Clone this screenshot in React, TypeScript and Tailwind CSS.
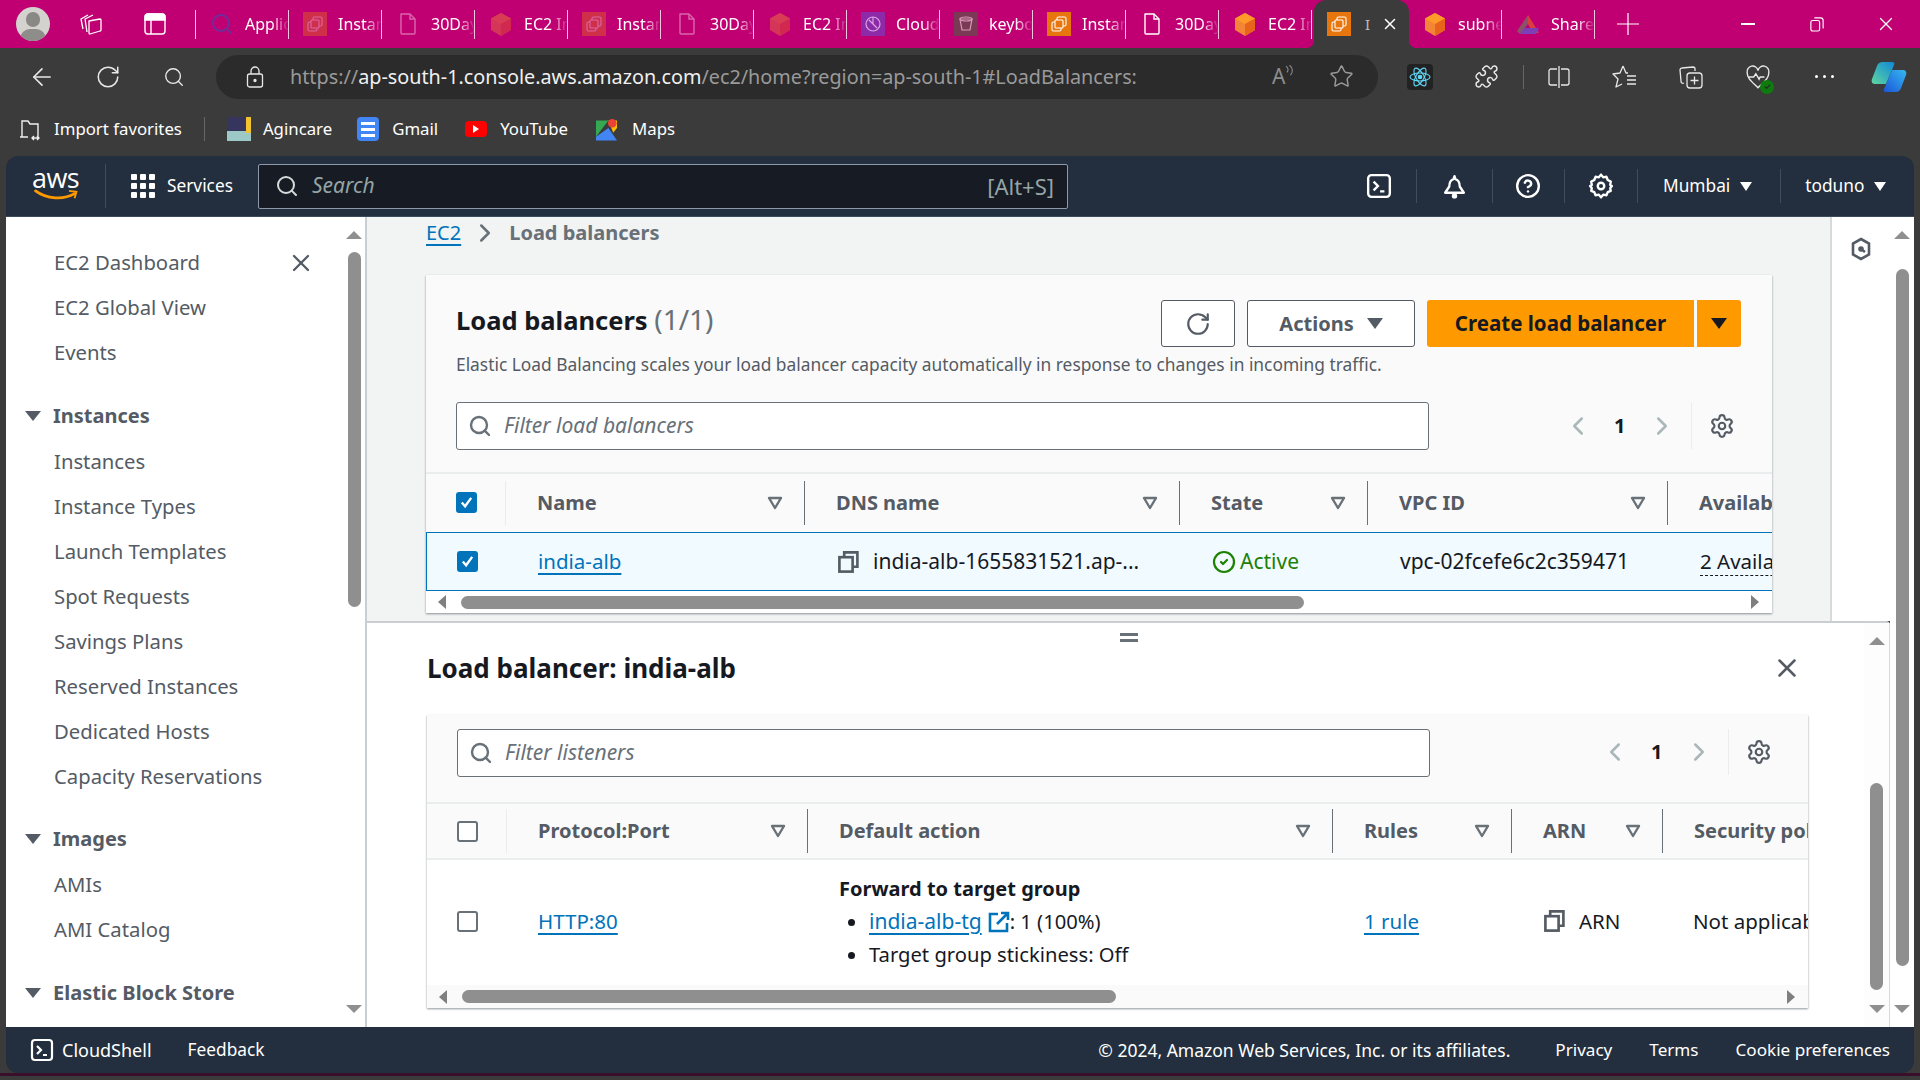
import React from 'react';
import {
  ArrowLeft, RotateCw, Search, Star, X, ChevronLeft, ChevronRight,
  Settings, CircleHelp, Puzzle, CircleCheck,
} from 'lucide-react';

const font = "font-['Noto_Sans','Open_Sans',sans-serif]";

type TabKind = 'search' | 'instance' | 'doc' | 'cube' | 'cloud' | 'bucket' | 'drive';

const tabs: { label: string; kind: TabKind; faded?: boolean }[] = [
  { label: 'Application', kind: 'search', faded: true },
  { label: 'Instances', kind: 'instance', faded: true },
  { label: '30Days', kind: 'doc', faded: true },
  { label: 'EC2 Instance', kind: 'cube', faded: true },
  { label: 'Instances', kind: 'instance', faded: true },
  { label: '30Days', kind: 'doc', faded: true },
  { label: 'EC2 Instance', kind: 'cube', faded: true },
  { label: 'Cloudfront', kind: 'cloud', faded: true },
  { label: 'keyboard', kind: 'bucket', faded: true },
  { label: 'Instances', kind: 'instance' },
  { label: '30Days', kind: 'doc' },
  { label: 'EC2 Instance', kind: 'cube' },
];

const TabIcon = ({ kind, faded }: { kind: TabKind; faded?: boolean }) => {
  const cls = `w-[24px] h-[24px] shrink-0 ${faded ? 'opacity-40' : ''}`;
  if (kind === 'search') return <Search className="w-[24px] h-[24px] shrink-0 text-[#6a2f9c]" strokeWidth={1.8} />;
  if (kind === 'doc')
    return (
      <svg viewBox="0 0 24 24" className={cls} fill="none" stroke="#fff" strokeWidth="1.400">
        <path d="M5 2h9l5 5v14a1 1 0 0 1-1 1H6a1 1 0 0 1-1-1z" strokeLinejoin="round" />
        <path d="M14 2v5h5" />
      </svg>
    );
  if (kind === 'cube')
    return (
      <svg viewBox="0 0 24 24" className={cls}>
        <path d="M12 1l10 5.500v11.500l-10 6-10-6v-11.500z" fill="#f58536" />
        <path d="M12 1l10 5.500-10 5.500-10-5.500z" fill="#ff9a2a" />
        <path d="M12 12l10-5.500v11.500l-10 6z" fill="#e8641b" />
      </svg>
    );
  if (kind === 'instance')
    return (
      <svg viewBox="0 0 24 24" className={cls}>
        <rect width="24" height="24" fill="#e8760f" />
        <rect x="10" y="5" width="9" height="9" rx="1.500" fill="none" stroke="#fff" strokeWidth="1.100" />
        <rect x="5" y="10" width="9" height="9" rx="1.500" fill="#e8760f" stroke="#fff" strokeWidth="1.100" />
        <rect x="8" y="8" width="8" height="8" rx="1" fill="#e8760f" stroke="#fff" strokeWidth="1.100" />
      </svg>
    );
  if (kind === 'cloud')
    return (
      <svg viewBox="0 0 24 24" className="w-[24px] h-[24px] shrink-0">
        <rect width="24" height="24" fill="#8c2aa8" />
        <circle cx="12" cy="12" r="7" fill="none" stroke="#d9a6e6" strokeWidth="1.200" />
        <path d="M8 8l8 8M12 5v7" stroke="#d9a6e6" strokeWidth="1.200" />
      </svg>
    );
  if (kind === 'bucket')
    return (
      <svg viewBox="0 0 24 24" className="w-[24px] h-[24px] shrink-0">
        <rect width="24" height="24" fill="#7a3a56" />
        <path d="M6 7h12l-2 11H8z" fill="none" stroke="#d99ab8" strokeWidth="1.200" />
        <ellipse cx="12" cy="7" rx="6" ry="2" fill="none" stroke="#d99ab8" strokeWidth="1.200" />
      </svg>
    );
  return (
    <svg viewBox="0 0 24 24" className="w-[24px] h-[24px] shrink-0">
      <path d="M12 3l11 18h-6L12 12z" fill="#d8403f" />
      <path d="M12 3L1 19l3 3 8-10z" fill="#8b5368" />
      <path d="M4 22l4-6h15l-3 6z" fill="#7c3fb5" />
    </svg>
  );
};

const Tab = ({ label, kind, faded }: { label: string; kind: TabKind; faded?: boolean }) => (
  <div className="w-[93px] h-[48px] flex items-center pl-[14px] overflow-hidden shrink-0 relative">
    <TabIcon kind={kind} faded={faded} />
    <span className="ml-[11px] text-white text-[16px] whitespace-nowrap overflow-hidden w-[44px] [mask-image:linear-gradient(to_right,black_60%,transparent)]">{label}</span>
    <div className="absolute right-0 top-[10px] w-px h-[29px] bg-[#f3c6e0]" />
  </div>
);

const WorkspacesIcon = () => (
  <svg viewBox="0 0 26 26" className="w-[26px] h-[26px] ml-[28px] shrink-0" fill="none" stroke="#fff" strokeWidth="1.300" strokeLinejoin="round">
    <path d="M5 18L3 8l7-4" />
    <path d="M9 21L7 8l8-4" />
    <path d="M11 10l11-2a1 1 0 0 1 1 1v10a1 1 0 0 1-1 1l-10 3a1 1 0 0 1-1-1z" />
  </svg>
);

const TabActionsIcon = () => (
  <svg viewBox="0 0 22 22" className="w-[22px] h-[22px] ml-[40px] shrink-0" fill="none" stroke="#fff" strokeWidth="1.400">
    <rect x="1" y="1" width="20" height="20" rx="3" />
    <path d="M1 6V4a3 3 0 0 1 3-3h14a3 3 0 0 1 3 3v3H1z" fill="#fff" />
    <path d="M7 7v14" />
  </svg>
);

const TabStrip = () => (
  <div className="h-[48px] bg-[#c00072] flex items-center shrink-0">
    <div className="w-[34px] h-[34px] rounded-full bg-[#d4d2cf] ml-[16px] relative overflow-hidden shrink-0">
      <div className="absolute left-[10px] top-[5px] w-[14px] h-[15px] rounded-full bg-[#8a8885]" />
      <div className="absolute left-[4px] top-[22px] w-[26px] h-[20px] rounded-full bg-[#8f8d8a]" />
    </div>
    <WorkspacesIcon />
    <TabActionsIcon />
    <div className="w-px h-[29px] bg-[#f3c6e0] ml-[29px] shrink-0" />
    {tabs.map((t, i) => (
      <Tab key={i} {...t} />
    ))}
    <div className="w-[95px] h-[48px] ml-[2px] bg-[#3b3b3b] rounded-t-xl flex items-center pl-[13px] shrink-0 relative">
      <TabIcon kind="instance" />
      <span className="ml-[14px] text-[#bbb] text-[15px]">I</span>
      <X className="w-[18px] h-[18px] text-white ml-[11px]" />
      <div className="absolute -left-[8px] bottom-0 w-[8px] h-[8px] bg-[radial-gradient(circle_at_0_0,transparent_8px,#3b3b3b_8px)]" />
      <div className="absolute -right-[8px] bottom-0 w-[8px] h-[8px] bg-[radial-gradient(circle_at_100%_0,transparent_8px,#3b3b3b_8px)]" />
    </div>
    <Tab label="subnet" kind="cube" />
    <Tab label="Share" kind="drive" />
    <svg viewBox="0 0 22 22" className="w-[22px] h-[22px] ml-[22px] shrink-0" stroke="#fff" strokeWidth="1.200">
      <path d="M11 0v22M0 11h22" />
    </svg>
    <div className="w-[14px] h-[2px] bg-white ml-[102px] shrink-0" />
    <svg viewBox="0 0 16 18" className="w-[14px] h-[16px] ml-[55px] shrink-0" fill="none" stroke="#fff" strokeWidth="1.300">
      <rect x="1" y="5" width="10" height="12" rx="2" />
      <path d="M5 2h7a3 3 0 0 1 3 3v9" />
    </svg>
    <X className="w-[22px] h-[22px] text-white ml-[51px] shrink-0" strokeWidth={1.4} />
  </div>
);

const SplitIcon = () => (
  <svg viewBox="0 0 24 24" className="w-[24px] h-[24px] ml-[23px] shrink-0" fill="none" stroke="#e8e8e8" strokeWidth="1.300">
    <path d="M10 4H4a2 2 0 0 0-2 2v12a2 2 0 0 0 2 2h6M14 4h6a2 2 0 0 1 2 2v12a2 2 0 0 1-2 2h-6M12 1v22" />
  </svg>
);

const FavoritesIcon = () => (
  <svg viewBox="0 0 26 26" className="w-[26px] h-[26px] ml-[41px] shrink-0" fill="none" stroke="#e8e8e8" strokeWidth="1.300" strokeLinejoin="round">
    <path d="M11 2l3 7h2M11 2L8 9l-7 1 5 5-2 8 6-3M15 12h9M15 16h9M15 20h9" />
  </svg>
);

const CollectionsIcon = () => (
  <svg viewBox="0 0 26 26" className="w-[26px] h-[26px] ml-[40px] shrink-0" fill="none" stroke="#e8e8e8" strokeWidth="1.300">
    <path d="M17 7V5a2 2 0 0 0-2-2L4 4a2 2 0 0 0-2 2l1 11a2 2 0 0 0 3 2" />
    <rect x="9" y="9" width="15" height="15" rx="3" />
    <path d="M16.500 12.500v8M12.500 16.500h8" />
  </svg>
);

const Toolbar = () => (
  <div className="h-[57px] flex items-center shrink-0 text-[#e8e8e8]">
    <ArrowLeft className="w-[28px] h-[28px] ml-[28px] shrink-0" strokeWidth={1.4} />
    <RotateCw className="w-[26px] h-[26px] ml-[39px] shrink-0" strokeWidth={1.4} />
    <Search className="w-[22px] h-[22px] ml-[42px] shrink-0" strokeWidth={1.5} />
    <div className="w-[1162px] h-[44px] ml-[31px] rounded-full bg-[#2b2b2b] flex items-center shrink-0">
      <svg viewBox="0 0 18 22" className="w-[18px] h-[22px] ml-[30px] shrink-0" fill="none" stroke="#e8e8e8" strokeWidth="1.300">
        <rect x="1.500" y="8" width="15" height="13" rx="2" />
        <path d="M5 8V5a4 4 0 0 1 8 0v3" />
        <circle cx="9" cy="14.500" r="1" fill="#e8e8e8" />
      </svg>
      <div className="ml-[26px] text-[19.800px] whitespace-nowrap w-[850px] text-[#9a9a9a]">
        https://<span className="text-[#f0f0f0]">ap-south-1.console.aws.amazon.com</span>/ec2/home?region=ap-south-1#LoadBalancers:
      </div>
      <div className="ml-[132px] w-[26px] flex items-center text-[#8d8d8d] text-[21px]">
        A
        <svg viewBox="0 0 10 16" className="w-[9px] h-[15px] -mt-[10px] shrink-0" fill="none" stroke="#8d8d8d" strokeWidth="1.200">
          <path d="M1 2c3 2 3 5 1 7M5 1c4 3 4 8 1 11" />
        </svg>
      </div>
      <Star className="w-[25px] h-[25px] ml-[31px] text-[#9a9a9a] shrink-0" strokeWidth={1.4} />
    </div>
    <div className="w-[26px] h-[26px] ml-[29px] bg-[#222] rounded-sm flex items-center justify-center shrink-0">
      <svg viewBox="0 0 24 24" className="w-[24px] h-[24px]" fill="none" stroke="#61dafb" strokeWidth="1.100">
        <ellipse cx="12" cy="12" rx="10" ry="4" />
        <ellipse cx="12" cy="12" rx="10" ry="4" transform="rotate(60 12 12)" />
        <ellipse cx="12" cy="12" rx="10" ry="4" transform="rotate(120 12 12)" />
        <circle cx="12" cy="12" r="1.800" fill="#61dafb" />
      </svg>
    </div>
    <Puzzle className="w-[25px] h-[25px] ml-[41px] shrink-0" strokeWidth={1.4} />
    <div className="w-px h-[24px] bg-[#666] ml-[24px] shrink-0" />
    <SplitIcon />
    <FavoritesIcon />
    <CollectionsIcon />
    <div className="relative ml-[41px] shrink-0">
      <svg viewBox="0 0 24 24" className="w-[26px] h-[26px]" fill="none" stroke="#e8e8e8" strokeWidth="1.300">
        <path d="M12 22C6 16 2 13 2 8a5 5 0 0 1 10-2 5 5 0 0 1 10 2c0 5-4 8-10 14z" />
        <path d="M3 12h5l2-3 3 5 1-2h4" />
      </svg>
      <div className="absolute -right-[3px] -bottom-[4px] w-[14px] h-[14px] rounded-full bg-[#0f7b0f] flex items-center justify-center">
        <svg viewBox="0 0 10 10" className="w-[9px] h-[9px]" fill="none" stroke="#2b2b2b" strokeWidth="1.500">
          <path d="M2 5l2 2 4-4" />
        </svg>
      </div>
    </div>
    <div className="flex gap-[5px] ml-[44px] shrink-0">
      <div className="w-[3px] h-[3px] rounded-full bg-white" />
      <div className="w-[3px] h-[3px] rounded-full bg-white" />
      <div className="w-[3px] h-[3px] rounded-full bg-white" />
    </div>
    <svg viewBox="0 0 36 32" className="w-[36px] h-[32px] ml-[37px] shrink-0">
      <defs>
        <linearGradient id="copA" x1="0" y1="1" x2="1" y2="0">
          <stop offset="0" stopColor="#5fd6a0" />
          <stop offset="1" stopColor="#0f88d8" />
        </linearGradient>
        <linearGradient id="copB" x1="0" y1="1" x2="1" y2="0">
          <stop offset="0" stopColor="#1b55d8" />
          <stop offset="1" stopColor="#35b8f0" />
        </linearGradient>
      </defs>
      <path d="M12 1h9c2 0 3 1 2 3l-8 19H5c-4 0-5-2-4-5l5-13c1-3 3-4 6-4z" fill="url(#copA)" />
      <path d="M24 31h-9c-2 0-3-1-2-3l8-19h10c4 0 5 2 4 5l-5 13c-1 3-3 4-6 4z" fill="url(#copB)" />
    </svg>
  </div>
);

const Bookmarks = () => (
  <div className="h-[51px] pb-[3px] flex items-center shrink-0 text-white text-[16.800px]">
    <svg viewBox="0 0 24 24" className="w-[24px] h-[24px] ml-[18px] shrink-0" fill="none" stroke="#f0f0f0" strokeWidth="1.400">
      <path d="M4 20V4h6l2 3h8v13M2 20h8M14 21h7M16 19l-2 2 2 2M19 19l2 2-2 2" />
    </svg>
    <span className="ml-[12px]">Import favorites</span>
    <div className="w-px h-[24px] bg-[#666] ml-[22px]" />
    <div className="w-[24px] h-[24px] ml-[22px] relative overflow-hidden bg-[#9cc8c6] shrink-0">
      <div className="absolute left-0 top-0 w-[20px] h-[14px] bg-[#36355e]" />
      <div className="absolute right-0 top-0 w-[5px] h-[16px] bg-[#f4c430]" />
    </div>
    <span className="ml-[12px]">Agincare</span>
    <div className="w-[22px] h-[24px] ml-[25px] rounded-sm bg-[#4285f4] flex flex-col justify-center gap-[3px] px-[4px] shrink-0">
      <div className="h-[3px] bg-white" />
      <div className="h-[3px] bg-white" />
      <div className="h-[3px] bg-white" />
    </div>
    <span className="ml-[13px]">Gmail</span>
    <div className="w-[22px] h-[16px] ml-[27px] rounded-[4px] bg-[#ff0000] flex items-center justify-center shrink-0">
      <div className="w-0 h-0 border-y-[4px] border-y-transparent border-l-[6px] border-l-white" />
    </div>
    <span className="ml-[13px]">YouTube</span>
    <svg viewBox="0 0 22 24" className="w-[21px] h-[24px] ml-[28px] shrink-0">
      <path d="M0 3h13L0 20z" fill="#34a853" />
      <path d="M13 3h9v8l-4 5z" fill="#fbbc04" />
      <path d="M0 20l13-9 9 13H0z" fill="#4285f4" />
      <circle cx="17" cy="6" r="4.500" fill="#ea4335" />
    </svg>
    <span className="ml-[15px]">Maps</span>
  </div>
);

const NavSep = () => <div className="w-px h-[34px] bg-[#414d5c] shrink-0" />;

const NavCaret = () => <div className="w-0 h-0 border-x-[6px] border-x-transparent border-t-[9px] border-t-white ml-[10px]" />;

const CloudShellIcon = ({ size }: { size: string }) => (
  <svg viewBox="0 0 24 24" className={`${size} shrink-0`} fill="none" stroke="#fff" strokeWidth="2.200">
    <rect x="2" y="2" width="20" height="20" rx="3" />
    <path d="M7 8l4 4-4 4M13 17h4" />
  </svg>
);

const NavBar = () => (
  <div className="h-[61px] bg-[#232f3e] rounded-t-xl flex items-center text-white shrink-0 border-b border-[#3d4a5a]">
    <div className="w-[99px] flex flex-col items-center shrink-0">
      <span className="text-[27px] leading-[22px] font-['Open_Sans',sans-serif] tracking-tight -mt-[4px]">aws</span>
      <svg viewBox="0 0 48 14" className="w-[48px] h-[13px]">
        <path d="M2 2c12 9 30 10 42 3" fill="none" stroke="#f90" strokeWidth="3" strokeLinecap="round" />
        <path d="M38 2l8 1-2 7" fill="none" stroke="#f90" strokeWidth="2" />
      </svg>
    </div>
    <div className="w-px h-[44px] bg-[#414d5c]" />
    <div className="grid grid-cols-3 gap-[3px] ml-[25px] shrink-0">
      {Array.from({ length: 9 }).map((_, i) => (
        <div key={i} className="w-[6px] h-[6px] bg-white rounded-[1px]" />
      ))}
    </div>
    <span className="ml-[12px] text-[17.300px] w-[68px]">Services</span>
    <div className="w-[810px] h-[45px] ml-[23px] bg-[#161b24] border border-[#8d99a8] rounded-[2px] flex items-center shrink-0">
      <Search className="w-[24px] h-[24px] ml-[16px] text-[#d5dbdb]" strokeWidth={2} />
      <span className="ml-[13px] italic text-[21px] text-[#95a5a6]">Search</span>
      <span className="ml-auto mr-[13px] text-[22px] text-[#95a5a6]">[Alt+S]</span>
    </div>
    <div className="ml-[298px]"><CloudShellIcon size="w-[26px] h-[26px]" /></div>
    <div className="ml-[24px]"><NavSep /></div>
    <svg viewBox="0 0 24 24" className="w-[25px] h-[25px] ml-[25px] shrink-0" fill="none" stroke="#fff" strokeWidth="2.200" strokeLinejoin="round">
      <path d="M12 2l1 3c3 1 4 4 4 7l4 6H3l4-6c0-3 1-6 4-7z" />
      <circle cx="12" cy="21" r="1.500" fill="#fff" />
    </svg>
    <div className="ml-[25px]"><NavSep /></div>
    <CircleHelp className="w-[26px] h-[26px] ml-[22px] shrink-0" strokeWidth={2.2} />
    <div className="ml-[23px]"><NavSep /></div>
    <svg viewBox="0 0 24 24" className="w-[26px] h-[26px] ml-[23px] shrink-0" fill="none" stroke="#fff" strokeWidth="2.200" strokeLinejoin="round">
      <path d="M12 1.500l2 2.500 3-.5 1.200 3L21 8l-.5 3 1.500 1-1.500 2 .5 2.500-2.800 1.200L17 20.500l-3-.5-2 2.500-2-2.500-3 .5-1.200-2.800L3 16.500 3.500 14 2 12l1.500-1L3 8l2.800-1.500L7 3.500l3 .5z" />
      <circle cx="12" cy="12" r="3" />
    </svg>
    <div className="ml-[23px]"><NavSep /></div>
    <span className="ml-[25px] text-[17.300px]">Mumbai</span>
    <NavCaret />
    <div className="ml-[28px]"><NavSep /></div>
    <span className="ml-[24px] text-[17.300px]">toduno</span>
    <NavCaret />
  </div>
);

const ScrollUp = () => <div className="w-0 h-0 border-x-[8px] border-x-transparent border-b-[8px] border-b-[#8f8f8f]" />;
const ScrollDown = () => <div className="w-0 h-0 border-x-[8px] border-x-transparent border-t-[8px] border-t-[#8f8f8f]" />;

const navGroups: { title?: string; items: string[] }[] = [
  { items: ['EC2 Dashboard', 'EC2 Global View', 'Events'] },
  {
    title: 'Instances',
    items: ['Instances', 'Instance Types', 'Launch Templates', 'Spot Requests', 'Savings Plans', 'Reserved Instances', 'Dedicated Hosts', 'Capacity Reservations'],
  },
  { title: 'Images', items: ['AMIs', 'AMI Catalog'] },
  { title: 'Elastic Block Store', items: [] },
];

const Sidebar = () => (
  <div className="w-[361px] shrink-0 bg-white border-r-2 border-[#c9ced3] flex relative">
    <div className="flex-1 pt-[23px] overflow-hidden">
      {navGroups.map((g, i) => (
        <div key={i} className={i === 0 ? '' : 'mt-[17.500px]'}>
          {g.title && (
            <div className="h-[46px] flex items-center pl-[19px] text-[20px] font-bold text-[#545b64]">
              <div className="w-0 h-0 border-x-[8px] border-x-transparent border-t-[10px] border-t-[#545b64]" />
              <span className="ml-[12px]">{g.title}</span>
            </div>
          )}
          {g.items.map((item, j) => (
            <div key={item} className="h-[45px] flex items-center pl-[48px] pr-[23px] text-[20.300px] text-[#545b64] justify-between">
              {item}
              {i === 0 && j === 0 && <X className="w-[28px] h-[28px] text-[#545b64] mr-[5px]" strokeWidth={2} />}
            </div>
          ))}
        </div>
      ))}
    </div>
    <div className="w-[22px] flex flex-col items-center pt-[14px] pb-[14px] shrink-0">
      <ScrollUp />
      <div className="w-[13px] h-[355px] mt-[13px] bg-[#8f8f8f] rounded-full" />
      <div className="mt-auto"><ScrollDown /></div>
    </div>
  </div>
);

const FilterCaret = () => (
  <svg viewBox="0 0 16 16" className="w-[16px] h-[16px] shrink-0" fill="none" stroke="#687078" strokeWidth="2.400">
    <path d="M2 3h12l-6 10z" strokeLinejoin="round" />
  </svg>
);

const Checkbox = ({ checked }: { checked?: boolean }) =>
  checked ? (
    <div className="w-[21px] h-[21px] rounded-[3px] bg-[#0073bb] flex items-center justify-center shrink-0">
      <svg viewBox="0 0 16 16" className="w-[15px] h-[15px]" fill="none" stroke="#fff" strokeWidth="2.500">
        <path d="M3 8l3.500 4L13 3" />
      </svg>
    </div>
  ) : (
    <div className="w-[21px] h-[21px] rounded-[3px] bg-white border-2 border-[#687078] shrink-0" />
  );

const FilterInput = ({ placeholder }: { placeholder: string }) => (
  <div className="w-[973px] h-[48px] bg-white border border-[#687078] rounded-[3px] flex items-center shrink-0">
    <Search className="w-[24px] h-[24px] ml-[11px] text-[#687078]" strokeWidth={2.4} />
    <span className="ml-[12px] italic text-[21px] text-[#687078]">{placeholder}</span>
  </div>
);

const Pager = ({ offset }: { offset: string }) => (
  <div className={`flex items-center shrink-0 ${offset}`}>
    <ChevronLeft className="w-[30px] h-[30px] text-[#aab7b8]" strokeWidth={2} />
    <span className="ml-[21px] text-[20px] font-bold text-[#16191f]">1</span>
    <ChevronRight className="w-[30px] h-[30px] text-[#aab7b8] ml-[22px]" strokeWidth={2} />
    <div className="w-px h-[46px] bg-[#eaeded] ml-[14px]" />
    <Settings className="w-[26px] h-[26px] text-[#545b64] ml-[17px]" strokeWidth={2} />
  </div>
);

const HeadCell = ({ label, last }: { label: string; last?: boolean }) => (
  <div className="h-[44px] flex items-center pl-[31px] border-r border-[#687078] last:border-r-0 text-[20px] font-bold text-[#545b64] whitespace-nowrap overflow-hidden">
    <span>{label}</span>
    {!last && <span className="ml-auto mr-[21px]"><FilterCaret /></span>}
  </div>
);

const CopyIcon = () => (
  <svg viewBox="0 0 20 20" className="w-[24px] h-[24px] shrink-0" fill="none" stroke="#545b64" strokeWidth="2.200">
    <rect x="2" y="6" width="11" height="12" />
    <path d="M6 6V2h11v12h-4" />
  </svg>
);

const HScroll = ({ thumb, bg }: { thumb: string; bg: string }) => (
  <div className={`h-[23px] flex items-center ${bg} pl-[12px] pr-[13px]`}>
    <div className="w-0 h-0 border-y-[7px] border-y-transparent border-r-[8px] border-r-[#7f7f7f]" />
    <div className={`h-[13px] bg-[#8f8f8f] rounded-full ml-[15px] ${thumb}`} />
    <div className="ml-auto w-0 h-0 border-y-[7px] border-y-transparent border-l-[8px] border-l-[#7f7f7f]" />
  </div>
);

const LoadBalancersCard = () => (
  <div className="w-[1346px] h-[338px] mt-[26px] bg-[#fafafa] shadow-[0_1px_2px_rgba(0,28,36,0.45)] flex flex-col overflow-hidden">
    <div className="pl-[30px] pr-[31px] pt-[24px]">
      <div className="flex items-start justify-between">
        <h2 className="text-[25.500px] leading-[40px] font-bold text-[#16191f]">
          Load balancers <span className="font-normal text-[28px] text-[#687078]">(1/1)</span>
        </h2>
        <div className="flex items-center mt-[1px]">
          <div className="w-[74px] h-[47px] border border-[#545b64] bg-white rounded-[3px] flex items-center justify-center">
            <RotateCw className="w-[26px] h-[26px] text-[#545b64]" strokeWidth={2} />
          </div>
          <div className="w-[168px] h-[47px] ml-[12px] border border-[#545b64] bg-white rounded-[3px] flex items-center justify-center text-[20px] font-bold text-[#545b64]">
            Actions
            <div className="w-0 h-0 border-x-[8px] border-x-transparent border-t-[11px] border-t-[#545b64] ml-[13px]" />
          </div>
          <div className="w-[267px] h-[47px] ml-[12px] bg-[#ff9900] rounded-l-[3px] flex items-center justify-center text-[20.500px] font-bold text-[#16191f]">
            Create load balancer
          </div>
          <div className="w-[44px] h-[47px] ml-[3px] bg-[#ff9900] rounded-r-[3px] flex items-center justify-center">
            <div className="w-0 h-0 border-x-[8px] border-x-transparent border-t-[11px] border-t-[#16191f]" />
          </div>
        </div>
      </div>
      <p className="text-[17.350px] leading-[24px] text-[#545b64] mt-[5px] whitespace-nowrap">
        Elastic Load Balancing scales your load balancer capacity automatically in response to changes in incoming traffic.
      </p>
      <div className="flex items-center mt-[26px]">
        <FilterInput placeholder="Filter load balancers" />
        <Pager offset="ml-[134px]" />
      </div>
    </div>
    <div className="mt-[22px] h-[60px] pb-[1px] shrink-0 border-t-2 border-[#eaeded] grid grid-cols-[80px_299px_375px_188px_300px_1fr] items-center">
      <div className="pl-[30px] border-r border-[#eaeded] h-[44px] flex items-center"><Checkbox checked /></div>
      <HeadCell label="Name" />
      <HeadCell label="DNS name" />
      <HeadCell label="State" />
      <HeadCell label="VPC ID" />
      <HeadCell label="Availability Zones" last />
    </div>
    <div className="h-[59px] shrink-0 bg-[#f1faff] border border-r-0 border-[#0073bb] grid grid-cols-[80px_299px_375px_188px_300px_1fr] items-center text-[20.500px] text-[#16191f] whitespace-nowrap">
      <div className="pl-[30px]"><Checkbox checked /></div>
      <div className="pl-[31px]"><span className="text-[#0073bb] underline underline-offset-4 decoration-2">india-alb</span></div>
      <div className="pl-[31px] flex items-center gap-[12px] text-[21px]"><CopyIcon />india-alb-1655831521.ap-...</div>
      <div className="pl-[31px] flex items-center gap-[4px] text-[#1d8102] text-[21px]">
        <CircleCheck className="w-[24px] h-[24px]" strokeWidth={2.2} />Active
      </div>
      <div className="pl-[31px] text-[21px]">vpc-02fcefe6c2c359471</div>
      <div className="pl-[31px] overflow-hidden"><span className="border-b border-dashed border-[#16191f]">2 Availability Zones</span></div>
    </div>
    <HScroll thumb="w-[843px]" bg="bg-white" />
  </div>
);

const ListenersCard = () => (
  <div className="w-[1381px] h-[293px] mt-[27px] ml-[60px] bg-white shadow-[0_1px_2px_rgba(0,28,36,0.45)] flex flex-col overflow-hidden">
    <div className="bg-[#fafafa] h-[87px] shrink-0 px-[30px] pt-[14px] flex items-start">
      <FilterInput placeholder="Filter listeners" />
      <Pager offset="ml-[170px]" />
    </div>
    <div className="h-[58px] shrink-0 bg-[#fafafa] border-y-2 border-[#eaeded] grid grid-cols-[80px_301px_525px_179px_151px_1fr] items-center">
      <div className="pl-[30px] border-r border-[#eaeded] h-[44px] flex items-center"><Checkbox /></div>
      <HeadCell label="Protocol:Port" />
      <HeadCell label="Default action" />
      <HeadCell label="Rules" />
      <HeadCell label="ARN" />
      <HeadCell label="Security policy" last />
    </div>
    <div className="h-[125px] pb-[3px] shrink-0 grid grid-cols-[80px_301px_525px_179px_151px_1fr] items-center text-[20.500px] text-[#16191f] whitespace-nowrap">
      <div className="pl-[30px]"><Checkbox /></div>
      <div className="pl-[31px]"><span className="text-[#0073bb] underline underline-offset-4 decoration-2">HTTP:80</span></div>
      <div className="pl-[31px] leading-[33px]">
        <div className="font-bold text-[20px]">Forward to target group</div>
        <ul className="list-disc pl-[30px] text-[20.200px]">
          <li>
            <span className="text-[#0073bb] underline underline-offset-4 decoration-2 text-[21px]">india-alb-tg</span>
            <svg viewBox="0 0 22 22" className="inline w-[22px] h-[22px] ml-[6px] -mt-[3px]" fill="none" stroke="#0073bb" strokeWidth="2.600">
              <path d="M10 3H2v17h17v-8M13 2h7v7M20 2L9 13" />
            </svg>
            : 1 (100%)
          </li>
          <li>Target group stickiness: Off</li>
        </ul>
      </div>
      <div className="pl-[31px]"><span className="text-[#0073bb] underline underline-offset-4 decoration-2">1 rule</span></div>
      <div className="pl-[31px] flex items-center gap-[12px]"><CopyIcon />ARN</div>
      <div className="pl-[30px] overflow-hidden">Not applicable</div>
    </div>
    <HScroll thumb="w-[654px]" bg="bg-[#fafafa]" />
  </div>
);

const SplitPanel = () => (
  <div className="flex-1 min-h-0 bg-white border-t-2 border-[#c9ced3] flex rounded-tr-sm">
    <div className="flex-1 min-w-0 relative">
      <div className="flex justify-center ml-[27px] pt-[10px]">
        <div className="w-[18px] h-[9px] border-y-[3px] border-[#687078]" />
      </div>
      <div className="flex items-center justify-between ml-[60px] mr-[62px] mt-[6px] h-[40px]">
        <h2 className="text-[26px] font-bold text-[#16191f]">Load balancer: india-alb</h2>
        <X className="w-[30px] h-[30px] text-[#545b64]" strokeWidth={2} />
      </div>
      <ListenersCard />
    </div>
    <div className="w-[26px] flex flex-col items-center pt-[14px] pb-[14px] shrink-0 bg-[#fdfdfd] border-r border-[#d5dbdb]">
      <ScrollUp />
      <div className="w-[13px] h-[207px] mt-[138px] bg-[#8f8f8f] rounded-full" />
      <div className="mt-auto"><ScrollDown /></div>
    </div>
  </div>
);

const PageTop = () => (
  <div className="h-[404px] flex shrink-0">
    <div className="w-[1463px] bg-[#f2f3f3] pl-[59px]">
      <div className="h-[32px] flex items-center text-[20px]">
        <span className="text-[#0073bb] underline underline-offset-4">EC2</span>
        <ChevronRight className="w-[30px] h-[30px] text-[#687078] mx-[9px]" strokeWidth={2} />
        <span className="font-bold text-[#687078]">Load balancers</span>
      </div>
      <LoadBalancersCard />
    </div>
    <div className="flex-1 bg-white border-l-2 border-[#d5dbdb] flex justify-center pt-[20px]">
      <svg viewBox="0 0 24 24" className="w-[24px] h-[24px]" fill="none" stroke="#545b64" strokeWidth="2.600">
        <path d="M12 2l8 4.500v11L12 22l-8-4.500v-11z" />
        <circle cx="12" cy="12" r="1.500" fill="#545b64" />
        <path d="M12 12l4 3" />
      </svg>
    </div>
  </div>
);

const Footer = () => (
  <div className="h-[46px] bg-[#232f3e] rounded-b-xl flex items-center text-[17.100px] text-white shrink-0">
    <div className="ml-[24px]"><CloudShellIcon size="w-[24px] h-[24px]" /></div>
    <span className="ml-[8px] text-[18px]">CloudShell</span>
    <span className="ml-[36px] text-[17.300px]">Feedback</span>
    <span className="ml-auto text-[17.500px]">© 2024, Amazon Web Services, Inc. or its affiliates.</span>
    <span className="ml-[45px]">Privacy</span>
    <span className="ml-[37px]">Terms</span>
    <span className="ml-[37px] mr-[24px]">Cookie preferences</span>
  </div>
);

const App = () => (
  <div className={`w-[1920px] h-[1080px] overflow-hidden bg-[#3b3b3b] flex flex-col ${font}`}>
    <TabStrip />
    <Toolbar />
    <Bookmarks />
    <div className="mx-[6px] flex flex-col h-[917px] shrink-0">
      <NavBar />
      <div className="h-[810px] flex shrink-0">
        <Sidebar />
        <div className="w-[1523px] flex flex-col shrink-0">
          <PageTop />
          <SplitPanel />
        </div>
        <div className="flex-1 bg-white flex flex-col items-center pt-[14px] pb-[14px]">
          <ScrollUp />
          <div className="w-[13px] h-[697px] mt-[30px] bg-[#8f8f8f] rounded-full" />
          <div className="mt-auto"><ScrollDown /></div>
        </div>
      </div>
      <Footer />
    </div>
    <div className="h-[3px] bg-[#3a0f2c] shrink-0" />
  </div>
);

export default App;
